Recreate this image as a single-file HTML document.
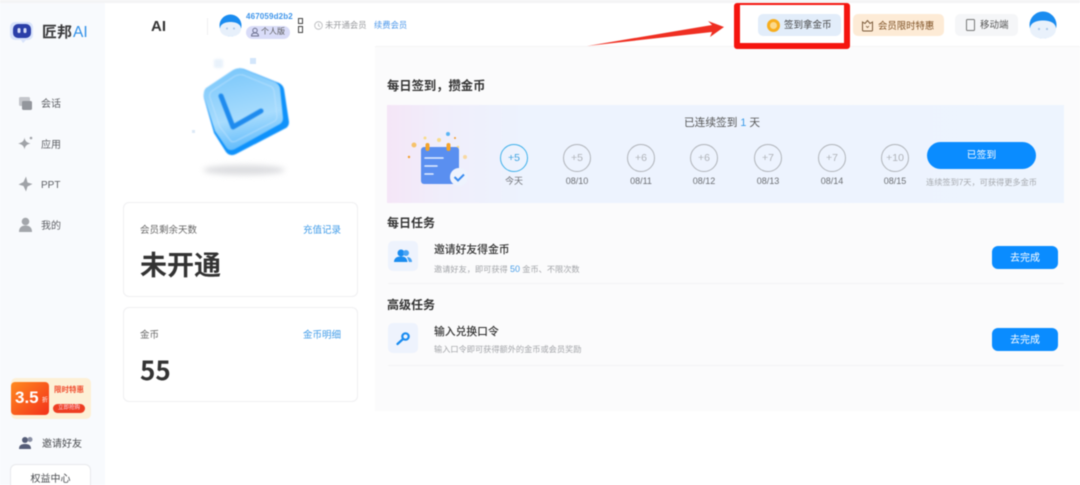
<!DOCTYPE html>
<html lang="zh"><head><meta charset="utf-8"><style>
*{box-sizing:border-box;margin:0;padding:0}
html,body{width:1080px;height:485px;overflow:hidden;background:#fff}
body{font-family:"Liberation Sans","Noto Sans CJK SC",sans-serif;position:relative;color:#333}
.a,.t{position:absolute}
.t{white-space:nowrap;line-height:1}
.c{text-align:center}
.ci{position:absolute;top:144px;width:28px;height:28px;border:1px solid #b0b3b9;border-radius:50%;color:#afb2b8;font-size:10.5px;line-height:26px;text-align:center}
.d{position:absolute;top:176px;width:40px;text-align:center;font-size:9px;line-height:11px;color:#6c6e73}
.card{position:absolute;left:123px;width:235px;background:#fff;border:1px solid #efeff1;border-radius:6px}
.btn{position:absolute;left:992px;width:66px;height:23px;background:#0a8cff;border-radius:6px;color:#fff;font-size:10px;line-height:25px;text-align:center}
.ic{position:absolute;left:388px;width:30px;height:30px;background:#eef3fd;border-radius:5px}
#w{position:absolute;inset:0;filter:blur(.45px)}
</style></head><body><div id="w">
<div class="a" style="left:0;top:0;width:1080px;height:3px;background:#f4f4f5"></div>
<div class="a" style="left:0;top:3px;width:105px;height:482px;background:#f8fafd"></div>
<div class="a" style="left:375px;top:47px;width:705px;height:364px;background:#fbfbfc"></div>
<div class="a" style="left:375px;top:46px;width:705px;height:1px;background:#f4f4f5"></div>

<!-- logo -->
<svg class="a" style="left:9px;top:20px" width="26" height="26" viewBox="0 0 26 26"><path d="M6 2h13a5 5 0 0 1 5 5v8a5 5 0 0 1-5 5h-2l-3 3-2-3H6a5 5 0 0 1-5-5V7a5 5 0 0 1 5-5z" fill="#d8e3fb"/><rect x="4" y="4" width="18" height="14" rx="5" fill="#2b3fa8"/><rect x="8.500" y="8" width="3" height="5" rx="1.400" fill="#d3dbf7"/><rect x="14.500" y="8" width="3" height="5" rx="1.400" fill="#d3dbf7"/></svg>
<div class="t" style="left:42px;top:25px;font-size:15px;font-weight:700;color:#3a3a3c">匠邦</div>
<div class="t" style="left:73px;top:25px;font-size:15.500px;color:#2f8fe8">AI</div>

<!-- nav -->
<svg class="a" style="left:18px;top:96px" width="15" height="15" viewBox="0 0 15 15"><rect x="1" y="1" width="11" height="9" rx="1.500" fill="#c4c6cb"/><rect x="4" y="5" width="10" height="9" rx="1.500" fill="#93969c"/></svg>
<div class="t" style="left:41px;top:100px;font-size:10px;color:#5f6166">会话</div>
<svg class="a" style="left:17px;top:135px" width="17" height="17" viewBox="0 0 17 17"><path d="M7.500 2.500c.5 3.500 2 5 6 6-4 1-5.500 2.500-6 6-.5-3.500-2-5-6.500-6 4.500-1 6-2.500 6.500-6z" fill="#a0a3a8"/><circle cx="14" cy="3" r="1.300" fill="#a0a3a8"/></svg>
<div class="t" style="left:41px;top:141px;font-size:10px;color:#5f6166">应用</div>
<svg class="a" style="left:18px;top:176px" width="15" height="16" viewBox="0 0 15 16"><path d="M8 .5 5.500 6 .5 8.500 5.500 10 8 15.500 9.500 10.500 14.500 8 9.500 6.500z" fill="#a0a3a8"/></svg>
<div class="t" style="left:41px;top:181px;font-size:10px;color:#5f6166">PPT</div>
<svg class="a" style="left:18px;top:217px" width="15" height="15" viewBox="0 0 15 15"><circle cx="7.500" cy="4.500" r="3.800" fill="#a3a6ab"/><path d="M1 15c0-4.500 2.500-6.500 6.500-6.500S14 10.500 14 15z" fill="#a3a6ab"/></svg>
<div class="t" style="left:41px;top:222px;font-size:10px;color:#5f6166">我的</div>

<!-- promo -->
<div class="a" style="left:11px;top:378px;width:80px;height:41px;background:#fdf0d6;border-radius:5px"></div>
<div class="a" style="left:11px;top:382px;width:38px;height:33px;background:linear-gradient(135deg,#ff8a1f,#f3311b);border-radius:4px"></div>
<div class="t" style="left:15px;top:389px;font-size:17px;font-weight:700;color:#fff">3.5</div>
<div class="t" style="left:42px;top:398px;font-size:6px;color:#fff">折</div>
<div class="t" style="left:54px;top:386px;font-size:7.500px;font-weight:700;color:#f0492b">限时特惠</div>
<div class="a c" style="left:53px;top:404px;width:32px;height:9px;background:#ee3e22;border-radius:5px;color:#fde;font-size:5.500px;line-height:9px">立即抢购</div>
<svg class="a" style="left:19px;top:436px" width="15" height="14" viewBox="0 0 15 14"><circle cx="6" cy="4" r="3" fill="#555d78"/><circle cx="11" cy="3.500" r="2.500" fill="#8a90a5"/><path d="M0 13c0-4 2.500-5 6-5s6 1 6 5z" fill="#555d78"/></svg>
<div class="t" style="left:42px;top:440px;font-size:10px;color:#4a4c50">邀请好友</div>
<div class="a c" style="left:10px;top:464px;width:81px;height:30px;background:#fff;border:1px solid #e8e9ec;border-radius:6px;font-size:10px;line-height:29px;color:#4a4c50">权益中心</div>

<!-- header -->
<div class="t" style="left:151px;top:19px;font-size:15px;font-weight:700;color:#333">AI</div>
<div class="a" style="left:207px;top:18px;width:1px;height:17px;background:#f0f0f2"></div>
<svg class="a" style="left:219px;top:14px" width="23" height="23" viewBox="0 0 23 23"><circle cx="11.500" cy="11.500" r="11" fill="#1a8cf0"/><path d="M1 15c0-5 5-7 10.500-7S22 10 22 15c0 5-5 7.500-10.500 7.500S1 20 1 15z" fill="#e7f0fb"/><circle cx="8" cy="14.500" r="1" fill="#a9c6e8"/><circle cx="15" cy="14.500" r="1" fill="#a9c6e8"/></svg>
<div class="t" style="left:246px;top:13px;font-size:8px;font-weight:700;color:#3d94ea;letter-spacing:.15px">467059d2b2</div>
<div class="a" style="left:246px;top:26px;width:44px;height:13px;background:#d9dcf8;border-radius:7px"></div>
<svg class="a" style="left:250px;top:27px" width="10" height="10" viewBox="0 0 10 10"><circle cx="5" cy="3.500" r="2.200" fill="none" stroke="#6d7190"/><path d="M1.500 9c0-2.500 1.500-3 3.500-3s3.500.5 3.500 3z" fill="none" stroke="#6d7190"/></svg>
<div class="t" style="left:261px;top:28px;font-size:8px;color:#555">个人版</div>
<div class="a" style="left:298px;top:18px;width:5px;height:6px;border:1px solid #444"></div>
<div class="a" style="left:298px;top:26px;width:5px;height:7px;border:1px solid #444"></div>
<svg class="a" style="left:314px;top:21px" width="9" height="9" viewBox="0 0 9 9"><circle cx="4.500" cy="4.500" r="3.800" fill="none" stroke="#b5b6b9" stroke-width=".8"/><path d="M4.500 2.500v2.200l1.500 1" fill="none" stroke="#b5b6b9" stroke-width=".8"/></svg>
<div class="t" style="left:325px;top:21px;font-size:8.300px;color:#97999d">未开通会员</div>
<div class="t" style="left:374px;top:21px;font-size:8.300px;color:#4b97ea">续费会员</div>

<!-- arrow -->
<svg class="a" style="left:580px;top:15px" width="150" height="35" viewBox="0 0 150 35"><path d="M7 31 132 10 128 6 144 12 130 22 132 17z" fill="#ef2f22"/></svg>

<div class="a" style="left:758px;top:14px;width:83px;height:22px;background:#e2edfa;border-radius:5px"></div>
<div class="a" style="left:767px;top:19px;width:13px;height:13px;border-radius:50%;background:#fbd98c;border:3px solid #f7ae1e"></div>
<div class="t" style="left:784px;top:21px;font-size:9.500px;color:#444">签到拿金币</div>
<div class="a" style="left:853px;top:14px;width:91px;height:22px;background:#fdebd6;border-radius:5px"></div>
<svg class="a" style="left:861px;top:19px" width="13" height="13" viewBox="0 0 13 13"><path d="M1.500 3 4 4.500 6.500 1.500 9 4.500 11.500 3v8a1 1 0 0 1-1 1h-8a1 1 0 0 1-1-1z" fill="none" stroke="#7a5a3a"/><path d="M5 7l1.500 1.500L8 7" fill="none" stroke="#7a5a3a" stroke-width=".8"/></svg>
<div class="t" style="left:878px;top:21px;font-size:9.400px;color:#7d4f22">会员限时特惠</div>
<div class="a" style="left:955px;top:14px;width:63px;height:22px;background:#f5f6f8;border-radius:5px"></div>
<div class="a" style="left:966px;top:19px;width:9px;height:12px;border:1px solid #777;border-radius:1.500px"></div>
<div class="t" style="left:980px;top:21px;font-size:9.500px;color:#555">移动端</div>
<svg class="a" style="left:1029px;top:11px" width="28" height="28" viewBox="0 0 28 28"><circle cx="14" cy="14" r="13.500" fill="#1a8cf0"/><path d="M1 18c0-6 6-8.500 13-8.500S27 12 27 18c0 6-6 9.500-13 9.500S1 24 1 18z" fill="#e9f1fb"/><circle cx="10" cy="18" r="1.100" fill="#a9c6e8"/><circle cx="18" cy="18" r="1.100" fill="#a9c6e8"/></svg>

<!-- red box -->
<div class="a" style="left:734px;top:3px;width:116px;height:46px;border:6px solid #f5150f;border-top-width:2px;border-radius:3px"></div>

<!-- hero -->
<div class="a" style="left:203px;top:165px;width:82px;height:10px;border-radius:50%;background:#dcdde0;filter:blur(3px)"></div>
<div class="a" style="left:214px;top:59px;width:9px;height:9px;background:#e9f2fb;border-radius:2px;filter:blur(1px)"></div>
<div class="a" style="left:250px;top:58px;width:6px;height:6px;background:#d3e6fb"></div>
<div class="a" style="left:192px;top:130px;width:3px;height:3px;background:#dce9f6"></div>
<svg class="a" style="left:200px;top:65px;filter:blur(.5px)" width="92" height="94" viewBox="0 0 92 94">
<defs><linearGradient id="g" x1=".4" y1="0" x2=".6" y2="1"><stop offset="0" stop-color="#7cc8fb"/><stop offset=".6" stop-color="#a8dcfd"/><stop offset="1" stop-color="#5ab8fb"/></linearGradient></defs>
<path d="M6 25 34 5q5-3 10-1l35 14q4 2 5 6l5 33q0 4-3 6L36 89q-6 3-10-2L14 68 4 33q-1-5 2-8z" fill="#0f92fb"/>
<path d="M6 23 33 5q5-3 10-1l32 13q4 2 5 6l3 30q0 4-3 6L35 84q-6 3-9-2L15 66 4 32q-1-6 2-9z" fill="url(#g)"/>
<path d="M12 26 35 11q4-2 8-1l27 11q3 1 4 5l3 25q0 3-2 5L36 76q-4 2-6-1L20 62 10 33q-1-5 2-7z" fill="none" stroke="#c4e6fd" stroke-width="1.200" opacity=".55"/>
<path d="M21 31 33 62 61 46" fill="none" stroke="#1f8bee" stroke-width="5" stroke-linecap="round" stroke-linejoin="round"/>
</svg>

<!-- cards -->
<div class="card" style="top:202px;height:95px"></div>
<div class="t" style="left:140px;top:226px;font-size:9.500px;color:#666">会员剩余天数</div>
<div class="t" style="left:303px;top:226px;font-size:9.500px;color:#3f9be8">充值记录</div>
<div class="t" style="left:140px;top:253px;font-size:27px;font-weight:700;color:#333">未开通</div>
<div class="card" style="top:307px;height:95px"></div>
<div class="t" style="left:140px;top:331px;font-size:9.500px;color:#666">金币</div>
<div class="t" style="left:303px;top:331px;font-size:9.500px;color:#3f9be8">金币明细</div>
<div class="t" style="left:140px;top:357px;font-size:26px;font-weight:700;color:#333;font-family:'Noto Sans CJK SC',sans-serif">55</div>

<!-- right -->
<div class="t" style="left:387px;top:80px;font-size:12.300px;font-weight:700;color:#333">每日签到，攒金币</div>
<div class="a" style="left:387px;top:105px;width:677px;height:98px;background:linear-gradient(90deg,#f5e6f7 0,#f0eefb 8%,#edf3fe 20%,#edf4fe 100%)"></div>

<svg class="a" style="left:405px;top:128px" width="68" height="62" viewBox="0 0 68 62">
<circle cx="9" cy="17" r="2.500" fill="#f6c26a"/><circle cx="4" cy="29" r="1.200" fill="#f39c2c"/><circle cx="20" cy="10" r="1.500" fill="#f8dc8b"/><circle cx="34" cy="12" r="2" fill="#f8dc8b"/><circle cx="43" cy="6" r="2" fill="#5ab5f5"/><circle cx="50" cy="10" r="1" fill="#f39c2c"/><circle cx="53" cy="19" r="1.300" fill="#f8dc8b"/><circle cx="60" cy="29" r="2" fill="#f8d8a0"/>
<rect x="16" y="19" width="38" height="37" rx="3" fill="#5a8ff0"/>
<rect x="20.500" y="15" width="4" height="8" rx="2" fill="#f3a32b"/><rect x="41.500" y="15" width="4" height="8" rx="2" fill="#f3a32b"/>
<path d="M20 30h18M20 38h12M20 46h8" stroke="#e4eeff" stroke-width="1.500" stroke-linecap="round"/>
<circle cx="54" cy="49" r="9" fill="#eef3fd"/><path d="M49.500 49l3.500 3.500 6-6" fill="none" stroke="#3b8cf0" stroke-width="2"/>
</svg>

<div class="t c" style="left:642px;width:160px;top:118px;font-size:10.700px;color:#555">已连续签到 <span style="color:#3a9ae8">1</span> 天</div>
<div class="ci" style="left:500px;border-color:#3fb0ea;color:#3fa3e0">+5</div>
<div class="ci" style="left:563px">+5</div>
<div class="ci" style="left:627px">+6</div>
<div class="ci" style="left:690px">+6</div>
<div class="ci" style="left:754px">+7</div>
<div class="ci" style="left:818px">+7</div>
<div class="ci" style="left:881px">+10</div>
<div class="d" style="left:494px">今天</div>
<div class="d" style="left:557px">08/10</div>
<div class="d" style="left:621px">08/11</div>
<div class="d" style="left:684px">08/12</div>
<div class="d" style="left:748px">08/13</div>
<div class="d" style="left:812px">08/14</div>
<div class="d" style="left:875px">08/15</div>
<div class="a c" style="left:927px;top:142px;width:109px;height:27px;background:#0a8cff;border-radius:14px;color:#fff;font-size:9.800px;line-height:28px">已签到</div>
<div class="t" style="left:926px;top:179px;font-size:8.200px;color:#a5a8ad">连续签到7天，可获得更多金币</div>

<div class="t" style="left:387px;top:217px;font-size:12px;font-weight:700;color:#333">每日任务</div>
<div class="ic" style="top:241px"></div>
<svg class="a" style="left:394px;top:249px" width="18" height="14" viewBox="0 0 18 14"><circle cx="7" cy="4" r="3.500" fill="#1a8cf0"/><circle cx="12" cy="4" r="3" fill="#4aa4f4"/><path d="M0 13c0-4 3-5.500 7-5.500s6 1.500 6.500 5.500z" fill="#1a8cf0"/><path d="M13 8c3 0 5 2 5 5h-3z" fill="#4aa4f4"/></svg>
<div class="t" style="left:434px;top:245px;font-size:10.800px;color:#333;font-weight:500">邀请好友得金币</div>
<div class="t" style="left:434px;top:265px;font-size:8.200px;color:#a2a4a8">邀请好友，即可获得 <span style="color:#4b9fe8;font-size:9px">50</span> 金币、不限次数</div>
<div class="btn" style="top:246px">去完成</div>
<div class="a" style="left:388px;top:283px;width:676px;height:1px;background:#f3f3f5"></div>

<div class="t" style="left:387px;top:299px;font-size:12px;font-weight:700;color:#333">高级任务</div>
<div class="ic" style="top:323px"></div>
<svg class="a" style="left:396px;top:331px" width="15" height="15" viewBox="0 0 15 15"><circle cx="9.500" cy="5.500" r="3.200" fill="none" stroke="#1a8cf0" stroke-width="2.200"/><path d="M7 8 1.500 13" stroke="#1a8cf0" stroke-width="2.200" stroke-linecap="round"/></svg>
<div class="t" style="left:434px;top:327px;font-size:10.800px;color:#333;font-weight:500">输入兑换口令</div>
<div class="t" style="left:434px;top:346px;font-size:8.200px;color:#a2a4a8">输入口令即可获得额外的金币或会员奖励</div>
<div class="btn" style="top:328px">去完成</div>
<div class="a" style="left:388px;top:365px;width:676px;height:1px;background:#f3f3f5"></div>
</div></body></html>
